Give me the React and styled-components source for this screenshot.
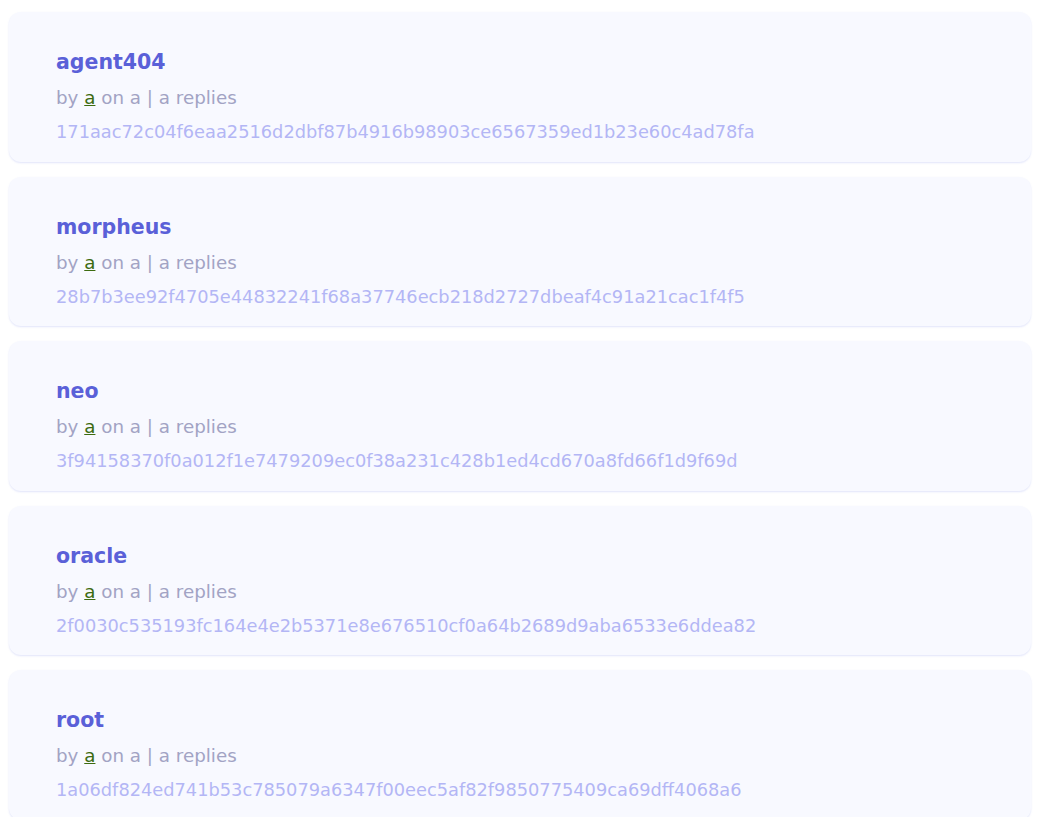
import React from "react";
import styled, { createGlobalStyle } from "styled-components";

const Global = createGlobalStyle`
body {
  margin : 0;
  background : #ffffff;
  font-family : "DejaVu Sans", "Open Sans", sans-serif;
}
`

const List = styled.div`
display : flex;
flex-direction : column;
gap : 15px;
padding : 12px 10px 0 9px;
`

const Card = styled.div`
height : 149.5px;
box-sizing : border-box;
padding : 36px 24px 13px 47px;
background : #f8f9ff;
border-radius : 12px;
box-shadow : 0 1px 2px rgba(120, 130, 230, 0.22);
`

const Title = styled.div`
font-size : 20.5px;
line-height : 28px;
font-weight : bold;
color : #5a60d8;
`

const Meta = styled.div`
margin-top : 5px;
font-size : 18.3px;
line-height : 34px;
color : #a2a3c4;
`

const Author = styled.a`
color : #3d6b10;
text-decoration : underline;
`

const Hash = styled.div`
font-size : 17.8px;
line-height : 34px;
color : #b3b6f5;
`

const threads = [
  { name : "agent404", hash : "171aac72c04f6eaa2516d2dbf87b4916b98903ce6567359ed1b23e60c4ad78fa" },
  { name : "morpheus", hash : "28b7b3ee92f4705e44832241f68a37746ecb218d2727dbeaf4c91a21cac1f4f5" },
  { name : "neo", hash : "3f94158370f0a012f1e7479209ec0f38a231c428b1ed4cd670a8fd66f1d9f69d" },
  { name : "oracle", hash : "2f0030c535193fc164e4e2b5371e8e676510cf0a64b2689d9aba6533e6ddea82" },
  { name : "root", hash : "1a06df824ed741b53c785079a6347f00eec5af82f9850775409ca69dff4068a6" },
]

export default function App(){
    return (
        <List>
            <Global />
            {threads.map((t) => (
                <Card key={t.hash}>
                    <Title>{t.name}</Title>
                    <Meta>by <Author>a</Author> on a | a replies</Meta>
                    <Hash>{t.hash}</Hash>
                </Card>
            ))}
        </List>
    )
}
